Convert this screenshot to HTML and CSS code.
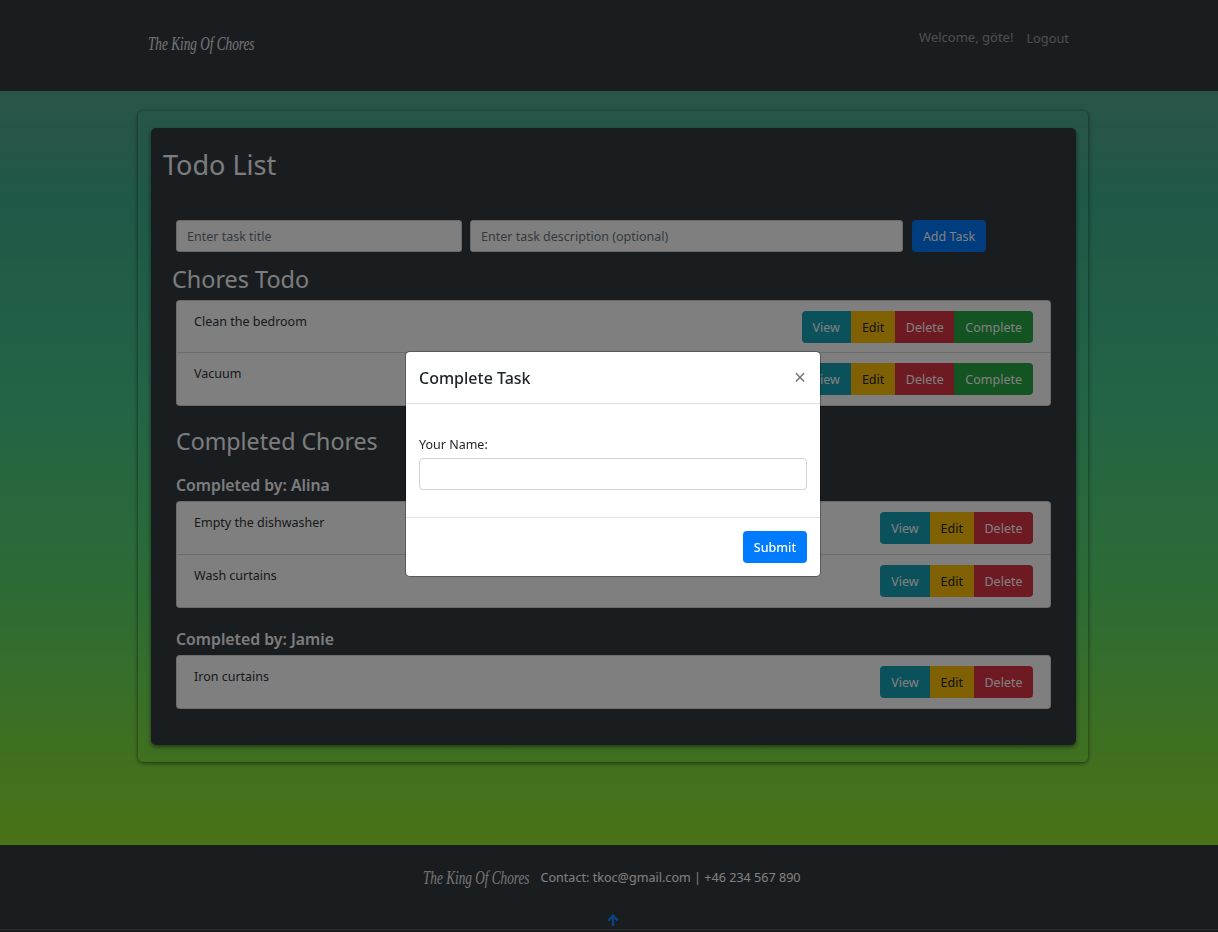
FILE: index.html
```html
<!DOCTYPE html>
<html lang="en">
<head>
    <meta charset="UTF-8">
    <meta name="viewport" content="width=device-width, initial-scale=1.0">
    <title>The King Of Chores - Todo List</title>
    <link rel="stylesheet" href="styles.css">
</head>
<body>
    <header class="site-header">
        <a class="logo" href="#">The King Of Chores</a>
        <nav class="site-nav">
            <span class="welcome">Welcome, göte!</span>
            <a class="nav-link" href="#">Logout</a>
        </nav>
    </header>

    <main class="page">
        <div class="outer-card">
            <div class="inner-card">
                <h1 class="page-title">Todo List</h1>

                <form class="add-form">
                    <input class="field field-title" type="text" placeholder="Enter task title">
                    <input class="field field-desc" type="text" placeholder="Enter task description (optional)">
                    <button class="btn btn-blue" type="button">Add Task</button>
                </form>

                <h2 class="section-title todo-title">Chores Todo</h2>
                <ul class="task-list todo-list">
                    <li class="task">
                        <span class="task-name">Clean the bedroom</span>
                        <div class="btn-group">
                            <button class="btn btn-teal">View</button>
                            <button class="btn btn-yellow">Edit</button>
                            <button class="btn btn-red">Delete</button>
                            <button class="btn btn-green">Complete</button>
                        </div>
                    </li>
                    <li class="task">
                        <span class="task-name">Vacuum</span>
                        <div class="btn-group">
                            <button class="btn btn-teal">View</button>
                            <button class="btn btn-yellow">Edit</button>
                            <button class="btn btn-red">Delete</button>
                            <button class="btn btn-green">Complete</button>
                        </div>
                    </li>
                </ul>

                <h2 class="section-title done-title">Completed Chores</h2>

                <h3 class="done-by">Completed by: Alina</h3>
                <ul class="task-list">
                    <li class="task">
                        <span class="task-name">Empty the dishwasher</span>
                        <div class="btn-group">
                            <button class="btn btn-teal">View</button>
                            <button class="btn btn-yellow">Edit</button>
                            <button class="btn btn-red">Delete</button>
                        </div>
                    </li>
                    <li class="task">
                        <span class="task-name">Wash curtains</span>
                        <div class="btn-group">
                            <button class="btn btn-teal">View</button>
                            <button class="btn btn-yellow">Edit</button>
                            <button class="btn btn-red">Delete</button>
                        </div>
                    </li>
                </ul>

                <h3 class="done-by done-by-next">Completed by: Jamie</h3>
                <ul class="task-list">
                    <li class="task">
                        <span class="task-name">Iron curtains</span>
                        <div class="btn-group">
                            <button class="btn btn-teal">View</button>
                            <button class="btn btn-yellow">Edit</button>
                            <button class="btn btn-red">Delete</button>
                        </div>
                    </li>
                </ul>
            </div>
        </div>
    </main>

    <footer class="site-footer">
        <div class="footer-row">
            <a class="logo" href="#">The King Of Chores</a>
            <span class="contact">Contact: tkoc@gmail.com | +46 234 567 890</span>
        </div>
        <a class="to-top" href="#" aria-label="Back to top">
            <svg width="12" height="12" viewBox="0 0 12 12"><path d="M6 12V2.2M1.2 6.6 6 1.6l4.8 5" fill="none" stroke="#1880ff" stroke-width="2.4"/></svg>
        </a>
    </footer>

    <!-- Modal stays open over the page -->
    <div class="backdrop"></div>
    <div class="modal">
        <div class="modal-header">
            <h4 class="modal-title">Complete Task</h4>
            <span class="modal-close">&times;</span>
        </div>
        <div class="modal-body">
            <label class="modal-label" for="your-name">Your Name:</label>
            <input class="modal-input" id="your-name" type="text">
        </div>
        <div class="modal-footer">
            <button class="btn btn-primary" type="button">Submit</button>
        </div>
    </div>
</body>
</html>
```

FILE: styles.css
```css
* {
    box-sizing: border-box;
}

html, body {
    margin: 0;
    padding: 0;
}

body {
    font-family: "Noto Sans", "Open Sans", sans-serif;
    font-size: 12.5px;
    line-height: 1.5;
    color: #30343a;
    background: #343a40;
    height: 932px;
    overflow: hidden;
}

a {
    text-decoration: none;
}

/* Header */
.site-header {
    height: 91px;
    background: #343a40;
    display: flex;
    justify-content: space-between;
    padding: 0 149px 0 148px;
}

/* no script font here, so the serif italic gets squeezed to the logo's width */
.logo {
    display: block;
    width: 106px;
    font-family: "Liberation Serif", serif;
    font-style: italic;
    font-size: 18px;
    color: #e6e8ea;
    white-space: nowrap;
    transform: scaleX(0.735);
    transform-origin: left center;
}

.site-header .logo {
    margin-top: 31px;
}

.site-nav {
    display: flex;
    gap: 13px;
    padding-top: 28px;
    font-size: 13px;
    color: rgba(255, 255, 255, 0.5);
}

.nav-link {
    color: rgba(255, 255, 255, 0.5);
    font-size: 12.8px;
    padding-top: 1px;
}

/* Main */
.page {
    height: 754px;
    padding: 20px 130px 0 138px;
    background: linear-gradient(to bottom, #54a892 0%, #40b090 14%, #46c88c 41%, #5cd868 68%, #94e62a 100%);
}

.outer-card {
    height: 651px;
    padding: 17px 12px 0 13px;
    border-radius: 5px;
    box-shadow: 0 1px 4px rgba(0, 0, 0, 0.6);
}

.inner-card {
    height: 617px;
    padding: 0 25px 0 25px;
    background: #343a40;
    border-radius: 5px;
    box-shadow: 0 2px 4px rgba(0, 0, 0, 0.5);
}

.page-title {
    margin: 0 0 0 -13px;
    padding-top: 17px;
    height: 92px;
    font-size: 27px;
    font-weight: 400;
    line-height: 40px;
    color: #f8f9fa;
}

.add-form {
    display: flex;
    height: 32px;
}

.field {
    height: 32px;
    padding: 0 10px;
    font: inherit;
    background: #fff;
    border: 1px solid #ced4da;
    border-radius: 3px;
}

.field::placeholder {
    color: #6c757d;
}

.field-title {
    width: 286px;
    margin-right: 8px;
}

.field-desc {
    width: 433px;
    margin-right: 9px;
}

.section-title {
    margin: 0;
    font-size: 23.4px;
    font-weight: 400;
    line-height: 36px;
    color: #f8f9fa;
}

.todo-title {
    margin: 9px 0 3px -4px;
}

.done-title {
    margin: 17px 0 14px;
    font-size: 23.2px;
}

.done-by {
    margin: 0 0 4px;
    font-size: 15.8px;
    font-weight: 600;
    line-height: 24px;
    color: #f8f9fa;
}

.done-by-next {
    margin-top: 19px;
}

/* Task rows */
.task-list {
    list-style: none;
    margin: 0;
    padding: 0;
    background: #fff;
    border-radius: 4px;
    border: 1px solid rgba(0, 0, 0, 0.15);
}

.task {
    display: flex;
    justify-content: space-between;
    height: 52px;
    padding: 10px 17px 0 17px;
}

.task + .task {
    border-top: 1px solid rgba(0, 0, 0, 0.15);
    height: 53px;
}

.todo-list .task:first-child {
    height: 51px;
}

.task-name {
    margin-top: 2px;
}

.btn-group {
    display: flex;
    height: 32px;
}

.btn {
    height: 32px;
    padding: 2px 11px 0;
    font: inherit;
    color: #fff;
    border: 0;
    border-radius: 0;
    white-space: nowrap;
}

.btn-group .btn:first-child {
    border-radius: 4px 0 0 4px;
}

.btn-group .btn:last-child {
    border-radius: 0 4px 4px 0;
}

.btn-blue,
.btn-primary {
    background: #007bff;
    border-radius: 4px;
}

.btn-blue {
    width: 74px;
    padding: 2px 0 0;
}

.btn-teal {
    background: #17a2b8;
}

.btn-yellow {
    background: #ffc107;
    color: #212529;
}

.btn-red {
    background: #dc3545;
    padding: 2px 10.5px 0;
}

.btn-green {
    background: #28a745;
}

/* Footer */
.site-footer {
    height: 85px;
    background: #343a40;
    text-align: center;
    padding: 21px 0 0;
    border-bottom: 1px solid #5c5c5c;
}

.footer-row {
    display: flex;
    justify-content: center;
    align-items: center;
    gap: 11px;
    height: 24px;
    padding-left: 6px;
}

.contact {
    color: #fff;
    font-size: 12.6px;
}

.to-top {
    display: flex;
    justify-content: center;
    margin: 24px 0 0 7px;
}

/* Modal */
.backdrop {
    position: fixed;
    inset: 0;
    background: rgba(0, 0, 0, 0.5);
}

.modal {
    position: fixed;
    left: 406px;
    top: 352px;
    width: 414px;
    height: 224px;
    background: #fff;
    border-radius: 4px;
    box-shadow: 0 0 0 1px rgba(0, 0, 0, 0.3);
}

.modal-header {
    display: flex;
    justify-content: space-between;
    align-items: center;
    height: 52px;
    padding: 0 14px 0 13px;
    border-bottom: 1px solid #dee2e6;
}

.modal-title {
    margin: 0;
    font-size: 16px;
    font-weight: 500;
    color: #212529;
}

.modal-close {
    font-size: 21px;
    font-weight: 400;
    line-height: 1;
    color: #7b7b7b;
}

.modal-body {
    height: 113px;
    padding: 31px 13px 0;
}

.modal-label {
    display: block;
    line-height: 20px;
    margin-bottom: 3px;
    color: #212529;
}

.modal-input {
    display: block;
    width: 100%;
    height: 32px;
    border: 1px solid #ced4da;
    border-radius: 4px;
}

.modal-footer {
    display: flex;
    justify-content: flex-end;
    padding: 13px 13px 0;
    border-top: 1px solid #dee2e6;
}

.btn-primary {
    width: 64px;
    padding: 2px 0 0;
    font-weight: 500;
}
```
